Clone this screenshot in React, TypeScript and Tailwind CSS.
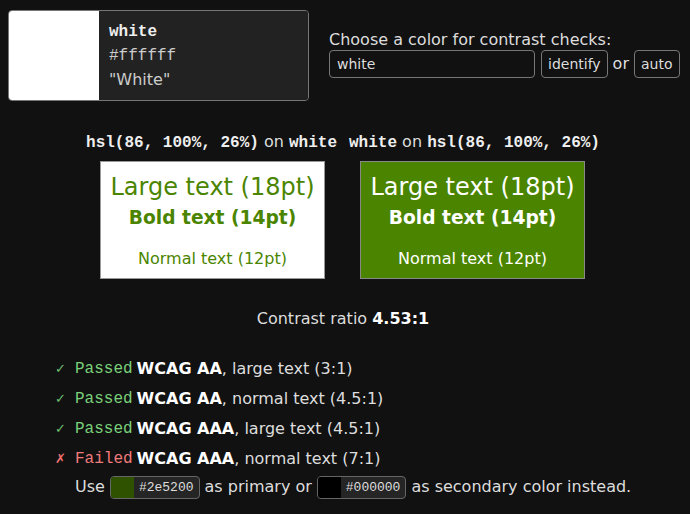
import React from 'react'

const sans = "font-['DejaVu_Sans',sans-serif]"
const mono = "font-['Liberation_Mono',monospace]"

const green = '#4b8500'

interface CheckProps {
  passed: boolean
  level: string
  label: string
}

function CheckRow({ passed, level, label }: CheckProps) {
  return (
    <div className="flex items-center h-[30px]">
      <span className={`w-5 text-[13px] ${passed ? 'text-[#6fbf6f]' : 'text-[#f07070]'}`}>
        {passed ? '✓' : '✗'}
      </span>
      <span className={`${mono} text-[16px] ${passed ? 'text-[#7ad17a]' : 'text-[#f07b7b]'}`}>
        {passed ? 'Passed' : 'Failed'}
      </span>
      <span className="ml-[4px] font-bold text-white">{level}</span>
      <span>, {label}</span>
    </div>
  )
}

function Chip({ color, hex }: { color: string; hex: string }) {
  return (
    <span className="inline-flex items-stretch h-[23px] border border-[#666] rounded-[4px] overflow-hidden bg-[#252525] align-middle mx-[5px]">
      <span className="w-[23px]" style={{ backgroundColor: color }} />
      <span className={`${mono} text-[13px] text-[#ddd] px-[5px] leading-[21px]`}>{hex}</span>
    </span>
  )
}

function Sample({ fg, bg, border }: { fg: string; bg: string; border: string }) {
  return (
    <div className={`w-[225px] h-[118px] border ${border} text-center pt-[9px]`} style={{ color: fg, backgroundColor: bg }}>
      <div className="text-[24px] leading-[32px]">Large text (18pt)</div>
      <div className="mt-[1px] text-[18.67px] leading-[28px] font-bold">Bold text (14pt)</div>
      <div className="mt-[15px] leading-[24px]">Normal text (12pt)</div>
    </div>
  )
}

export default function App() {
  return (
    <div className={`${sans} min-h-[514px] bg-[#111111] text-[#dddddd] text-[16px] leading-6 px-2 pt-[10px]`}>
      {/* Top row */}
      <div className="flex items-center">
        <div className="flex w-[301px] h-[91px] border border-[#777] rounded-[4px] overflow-hidden">
          <div className="w-[90px] bg-white" />
          <div className="flex-1 bg-[#222222] px-[10px] pt-[9px] leading-[24px]">
            <div className={`${mono} font-bold text-[#eeeeee]`}>white</div>
            <div className={`${mono} text-[#cccccc]`}>#ffffff</div>
            <div className="text-[#cccccc]">"White"</div>
          </div>
        </div>
        <div className="ml-[20px] pb-[4px]">
          <div className="leading-[20px] text-[#dddddd]">Choose a color for contrast checks:</div>
          <div className="flex items-center">
            <div className="w-[206px] h-[28px] border border-[#777] rounded-[4px] text-[14px] pl-[7px] leading-[26px] text-[#dddddd]">
              white
            </div>
            <div className="ml-[6px] h-[28px] border border-[#777] rounded-[4px] text-[14px] px-[6px] leading-[26px]">
              identify
            </div>
            <span className="mx-[5px]">or</span>
            <div className="h-[28px] border border-[#777] rounded-[4px] text-[14px] px-[6px] leading-[26px]">
              auto
            </div>
          </div>
        </div>
      </div>

      {/* Pair headings */}
      <div className="mt-[29px] flex justify-center gap-[12px] pr-[4px]">
        <span>
          <b className={`${mono} text-[#eeeeee]`}>hsl(86, 100%, 26%)</b> on <b className={`${mono} text-[#eeeeee]`}>white</b>
        </span>
        <span>
          <b className={`${mono} text-[#eeeeee]`}>white</b> on <b className={`${mono} text-[#eeeeee]`}>hsl(86, 100%, 26%)</b>
        </span>
      </div>

      {/* Sample cards */}
      <div className="mt-[6px] flex justify-center gap-[35px] pr-[5px]">
        <Sample fg={green} bg="#ffffff" border="border-[#999]" />
        <Sample fg="#ffffff" bg={green} border="border-[#888]" />
      </div>

      {/* Ratio */}
      <div className="mt-[28px] text-center pr-[4px]">
        Contrast ratio <b className="text-white">4.53:1</b>
      </div>

      {/* Checks */}
      <div className="mt-[23px] pl-[47px]">
        <CheckRow passed level="WCAG AA" label="large text (3:1)" />
        <CheckRow passed level="WCAG AA" label="normal text (4.5:1)" />
        <CheckRow passed level="WCAG AAA" label="large text (4.5:1)" />
        <CheckRow passed={false} level="WCAG AAA" label="normal text (7:1)" />
        <div className="pl-5 h-[26px] flex items-center">
          Use<Chip color="#2e5200" hex="#2e5200" />as primary or<Chip color="#000000" hex="#000000" />as secondary color instead.
        </div>
      </div>
    </div>
  )
}
